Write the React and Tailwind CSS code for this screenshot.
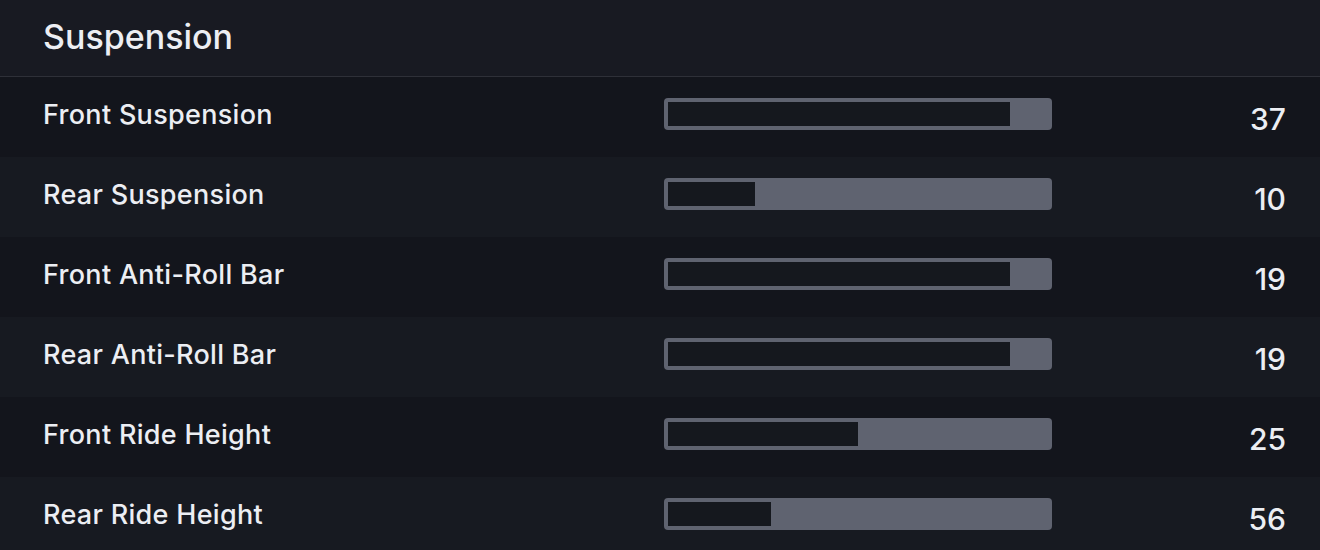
import React from "react";

const rows = [
  { label: "Front Suspension", value: 37, fill: 342 },
  { label: "Rear Suspension", value: 10, fill: 87 },
  { label: "Front Anti-Roll Bar", value: 19, fill: 342 },
  { label: "Rear Anti-Roll Bar", value: 19, fill: 342 },
  { label: "Front Ride Height", value: 25, fill: 190 },
  { label: "Rear Ride Height", value: 56, fill: 103 },
];

export default function App() {
  return (
    <div
      className="w-[1320px] h-[550px] overflow-hidden bg-[#181a22] text-[#eceef3]"
      style={{ fontFamily: "Inter, 'Noto Sans', sans-serif" }}
    >
      <div className="h-[77px] flex items-center pl-[43px] pb-[3px] border-b border-[#2e3038]">
        <h1 className="text-[34px] leading-[40px] font-medium">Suspension</h1>
      </div>
      {rows.map((r, i) => (
        <div
          key={r.label}
          className={`h-[80px] pt-[21px] pl-[43px] grid grid-cols-[621px_388px_234px] items-start ${
            i % 2 === 0 ? "bg-[#13151c]" : "bg-[#171a21]"
          }`}
        >
          <div className="text-[27px] leading-[32px] font-medium tracking-[0.3px] mt-[1px]">{r.label}</div>
          <div className="h-[32px] rounded-[4px] bg-[#5f6370] p-[4px] flex">
            <div className="h-full bg-[#15181e]" style={{ width: r.fill }} />
          </div>
          <div className="text-[30px] leading-[32px] font-medium text-right mt-[5px]">
            {r.value}
          </div>
        </div>
      ))}
    </div>
  );
}
